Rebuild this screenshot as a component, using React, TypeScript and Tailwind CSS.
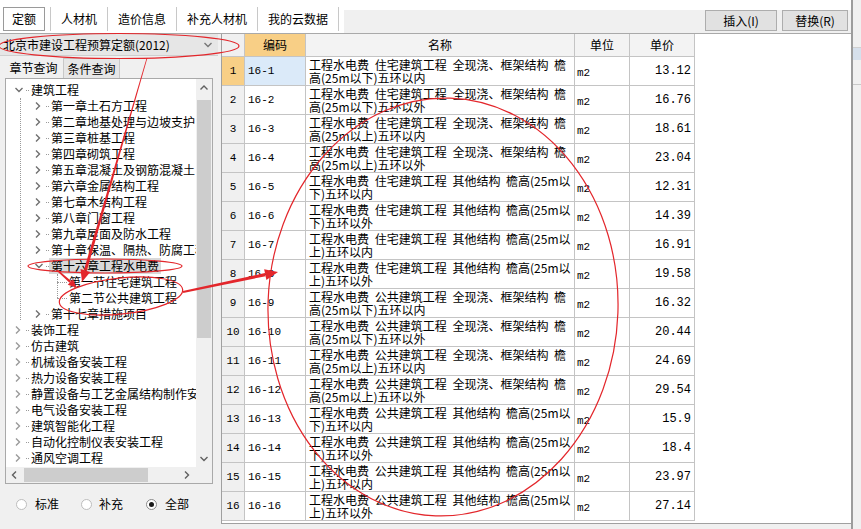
import React from "react";

const RED = "#e3262b";

type TreeNode = { label: string; level: 0 | 1 | 2; open?: boolean; active?: boolean };

const TREE: TreeNode[] = [
  { label: "建筑工程", level: 0, open: true },
  { label: "第一章土石方工程", level: 1 },
  { label: "第二章地基处理与边坡支护", level: 1 },
  { label: "第三章桩基工程", level: 1 },
  { label: "第四章砌筑工程", level: 1 },
  { label: "第五章混凝土及钢筋混凝土", level: 1 },
  { label: "第六章金属结构工程", level: 1 },
  { label: "第七章木结构工程", level: 1 },
  { label: "第八章门窗工程", level: 1 },
  { label: "第九章屋面及防水工程", level: 1 },
  { label: "第十章保温、隔热、防腐工程", level: 1 },
  { label: "第十六章工程水电费", level: 1, open: true, active: true },
  { label: "第一节住宅建筑工程", level: 2 },
  { label: "第二节公共建筑工程", level: 2 },
  { label: "第十七章措施项目", level: 1 },
  { label: "装饰工程", level: 0 },
  { label: "仿古建筑", level: 0 },
  { label: "机械设备安装工程", level: 0 },
  { label: "热力设备安装工程", level: 0 },
  { label: "静置设备与工艺金属结构制作安装工程", level: 0 },
  { label: "电气设备安装工程", level: 0 },
  { label: "建筑智能化工程", level: 0 },
  { label: "自动化控制仪表安装工程", level: 0 },
  { label: "通风空调工程", level: 0 },
];

// code, building kind, cast-in-place frame?, 以下/以上, 以内/以外, price
const ROWS: [string, string, boolean, string, string, string][] = [
  ["16-1", "住宅", true, "下", "内", "13.12"],
  ["16-2", "住宅", true, "下", "外", "16.76"],
  ["16-3", "住宅", true, "上", "内", "18.61"],
  ["16-4", "住宅", true, "上", "外", "23.04"],
  ["16-5", "住宅", false, "下", "内", "12.31"],
  ["16-6", "住宅", false, "下", "外", "14.39"],
  ["16-7", "住宅", false, "上", "内", "16.91"],
  ["16-8", "住宅", false, "上", "外", "19.58"],
  ["16-9", "公共", true, "下", "内", "16.32"],
  ["16-10", "公共", true, "下", "外", "20.44"],
  ["16-11", "公共", true, "上", "内", "24.69"],
  ["16-12", "公共", true, "上", "外", "29.54"],
  ["16-13", "公共", false, "下", "内", "15.9"],
  ["16-14", "公共", false, "下", "外", "18.4"],
  ["16-15", "公共", false, "上", "内", "23.97"],
  ["16-16", "公共", false, "上", "外", "27.14"],
];

const Chevron = ({ dir, color = "#7a7a7a" }: { dir: "right" | "down" | "up" | "left"; color?: string }) => {
  const d = {
    right: "M2 1.5l3.5 3.5-3.5 3.5",
    left: "M6 1.5L2.5 5 6 8.5",
    down: "M1.5 3l3.5 3.5L8.5 3",
    up: "M1.5 6.5L5 3l3.5 3.5",
  }[dir];
  return (
    <svg width="10" height="10" viewBox="0 0 10 10" className="shrink-0">
      <path d={d} fill="none" stroke={color} strokeWidth="1.4" />
    </svg>
  );
};

const TopBar = () => {
  const tabs = ["人材机", "造价信息", "补充人材机", "我的云数据"];
  return (
    <div className="flex h-[34px] border-b border-[#a9a9a9] bg-white">
      <div className="flex items-start pl-[3px] pt-[7px]">
        <div className="flex h-[24px] w-[42px] items-center justify-center border border-[#9a9a9a]">定额</div>
        <div className="ml-[5px] h-[24px] w-px bg-[#c8c8c8]" />
        {tabs.map((t) => (
          <React.Fragment key={t}>
            <div className="flex h-[24px] items-center px-[10px]">{t}</div>
            <div className="h-[24px] w-px bg-[#c8c8c8]" />
          </React.Fragment>
        ))}
      </div>
      <div className="ml-[5px] mt-[10px] flex flex-1 items-start justify-end gap-[5px] bg-[#f0f0f0] pr-[3px]">
        <button className="flex h-[21px] w-[72px] items-center justify-center border border-[#adadad] bg-[#e1e1e1]">
          插入(I)
        </button>
        <button className="flex h-[21px] w-[66px] items-center justify-center border border-[#adadad] bg-[#e1e1e1]">
          替换(R)
        </button>
      </div>
    </div>
  );
};

const TreeRow = ({ node }: { node: TreeNode }) => {
  const label = (
    <span className={`shrink-0 whitespace-nowrap px-[2px] ${node.active ? "bg-[#d9d9d9]" : ""}`}>{node.label}</span>
  );
  if (node.level === 2) {
    return (
      <div className="flex h-[16px] items-center">
        <div className="w-[51px] shrink-0" />
        <div className="w-[10px] shrink-0 border-t border-dotted border-[#9a9a9a]" />
        {label}
      </div>
    );
  }
  return (
    <div className="flex h-[16px] items-center">
      <div className={`shrink-0 ${node.level === 0 ? "w-[8px]" : "w-[28px]"}`} />
      <Chevron dir={node.open ? "down" : "right"} color={node.level === 0 && !node.open ? "#9a9a9a" : "#6f6f6f"} />
      <div className="flex w-[5px] shrink-0 items-center justify-end">
        <div className="w-[3px] border-t border-dotted border-[#9a9a9a]" />
      </div>
      {label}
    </div>
  );
};

const LeftPanel = () => (
  <div className="flex w-[218px] shrink-0 flex-col bg-[#f0f0f0]">
    <div className="flex h-[22px] items-center justify-between border-b border-[#cfcfcf] bg-[#e6e6e6] pl-[3px] pr-[5px]">
      <span className="whitespace-nowrap">北京市建设工程预算定额(2012)</span>
      <Chevron dir="down" color="#777" />
    </div>
    <div className="flex h-[22px] items-end pl-[5px]">
      <div className="flex h-[21px] w-[57px] items-center justify-center">章节查询</div>
      <div className="ml-[1px] flex h-[20px] w-[57px] items-center justify-center border border-b-0 border-[#c8c8c8] bg-[#e6e6e6]">
        条件查询
      </div>
    </div>
    <div className="mx-[5px] flex h-[406px] flex-col border border-[#a9a9a9] bg-white">
      <div className="flex min-h-0 flex-1">
        <div className="relative min-w-0 flex-1 overflow-hidden pt-[3px]">
          <div className="absolute left-[14px] top-[19px] h-[222px] border-l border-dotted border-[#9a9a9a]" />
          <div className="absolute left-[51px] top-[195px] h-[24px] border-l border-dotted border-[#9a9a9a]" />
          {TREE.map((n) => (
            <TreeRow key={n.label} node={n} />
          ))}
        </div>
        <div className="flex w-[16px] shrink-0 flex-col items-center bg-[#f0f0f0]">
          <div className="flex h-[17px] items-center">
            <Chevron dir="up" color="#606060" />
          </div>
          <div className="mt-[4px] h-[238px] w-[14px] bg-[#cdcdcd]" />
          <div className="flex-1" />
          <div className="flex h-[17px] items-center">
            <Chevron dir="down" color="#606060" />
          </div>
        </div>
      </div>
      <div className="flex h-[16px]">
        <div className="flex flex-1 items-center bg-[#f0f0f0]">
          <div className="flex w-[17px] justify-center">
            <Chevron dir="left" color="#606060" />
          </div>
          <div className="ml-px h-[14px] w-[124px] bg-[#cdcdcd]" />
          <div className="flex-1" />
          <div className="flex w-[17px] justify-center">
            <Chevron dir="right" color="#606060" />
          </div>
        </div>
        <div className="w-[16px] bg-[#f0f0f0]" />
      </div>
    </div>
    <div className="flex flex-1 items-center pl-[16px]">
      <div className="h-[11px] w-[11px] rounded-full border border-[#bdbdbd] bg-white" />
      <span className="ml-[8px]">标准</span>
      <div className="ml-[22px] h-[11px] w-[11px] rounded-full border border-[#bdbdbd] bg-white" />
      <span className="ml-[7px]">补充</span>
      <div className="ml-[23px] flex h-[11px] w-[11px] items-center justify-center rounded-full border border-[#8a8a8a] bg-white">
        <div className="h-[5px] w-[5px] rounded-full bg-[#1a1a1a]" />
      </div>
      <span className="ml-[8px]">全部</span>
    </div>
  </div>
);

const cell = "flex shrink-0 border-b border-r border-[#c4c4c4]";
const mono = "font-['Liberation_Mono',monospace]";

const QuotaTable = () => (
  <div className="ml-[3px] flex-1 border-b border-l border-[#a0a0a0] bg-white">
    <div className="flex h-[23px]">
      <div className={`${cell} w-[23px] bg-[#f0f0f0]`} />
      <div className={`${cell} w-[61px] items-center justify-center bg-[#f8cf86]`}>编码</div>
      <div className={`${cell} w-[269px] items-center justify-center bg-[#f3f3f3]`}>名称</div>
      <div className={`${cell} w-[55px] items-center justify-center bg-[#f3f3f3]`}>单位</div>
      <div className={`${cell} w-[65px] items-center justify-center bg-[#f3f3f3]`}>单价</div>
    </div>
    {ROWS.map(([code, kind, frame, h, loc, price], i) => {
      const line1 = frame
        ? `工程水电费 ${kind}建筑工程 全现浇、框架结构 檐`
        : `工程水电费 ${kind}建筑工程 其他结构 檐高(25m以`;
      const line2 = frame ? `高(25m以${h})五环以${loc}` : `${h})五环以${loc}`;
      const first = i === 0;
      return (
        <div key={code} className="flex h-[29px]">
          <div
            className={`${cell} ${mono} w-[23px] items-center justify-center text-[11px] ${
              first ? "bg-[#f8cf86]" : "bg-[#f0f0f0]"
            }`}
          >
            {i + 1}
          </div>
          <div className={`${cell} ${mono} w-[61px] items-center pl-[3px] text-[11px] ${first ? "bg-[#dbeaf9]" : ""}`}>
            {code}
          </div>
          <div className={`${cell} w-[269px] flex-col overflow-hidden pl-[3px] pt-[1px] leading-[13px] [word-spacing:3px]`}>
            <span className="whitespace-nowrap">{line1}</span>
            <span className="whitespace-nowrap">{line2}</span>
          </div>
          <div className={`${cell} ${mono} w-[55px] items-center pl-[2px] pt-[3px] text-[11px]`}>m2</div>
          <div className={`${cell} ${mono} w-[65px] items-center justify-end pr-[3px] text-[12px]`}>{price}</div>
        </div>
      );
    })}
  </div>
);

const Arrow = ({
  x1, y1, x2, y2, w1, w2, head,
}: { x1: number; y1: number; x2: number; y2: number; w1: number; w2: number; head: number }) => {
  const len = Math.hypot(x2 - x1, y2 - y1);
  const ux = (x2 - x1) / len;
  const uy = (y2 - y1) / len;
  const px = -uy;
  const py = ux;
  const bx = x2 - ux * head;
  const by = y2 - uy * head;
  const hw = head * 0.42;
  const shaft = [
    [x1 + (px * w1) / 2, y1 + (py * w1) / 2],
    [bx + (px * w2) / 2, by + (py * w2) / 2],
    [bx - (px * w2) / 2, by - (py * w2) / 2],
    [x1 - (px * w1) / 2, y1 - (py * w1) / 2],
  ];
  return (
    <g fill={RED}>
      <polygon points={shaft.map((p) => p.join(",")).join(" ")} />
      <polygon points={`${x2},${y2} ${bx + px * hw},${by + py * hw} ${bx - px * hw},${by - py * hw}`} />
    </g>
  );
};

const Annotations = () => (
  <svg className="pointer-events-none absolute left-0 top-0" width="861" height="529" viewBox="0 0 861 529">
    <g fill="none" stroke={RED} strokeWidth="1.2">
      <ellipse cx="119" cy="46" rx="120" ry="12.5" />
      <ellipse cx="105" cy="266" rx="77" ry="7" />
      <ellipse cx="121" cy="296" rx="62" ry="18" transform="rotate(-6 121 296)" />
      <ellipse cx="443" cy="307" rx="175" ry="209" transform="rotate(2 443 307)" />
    </g>
    <Arrow x1={147} y1={58} x2={82} y2={282} w1={0.8} w2={3} head={12} />
    <Arrow x1={57} y1={270} x2={77} y2={288} w1={1.6} w2={2.4} head={9} />
    <Arrow x1={183} y1={292} x2={278} y2={272} w1={2} w2={3.2} head={13} />
  </svg>
);

export default function App() {
  return (
    <div className="relative flex h-[529px] w-[861px] overflow-hidden bg-[#f0f0f0] font-['Noto_Sans_CJK_SC',sans-serif] text-[12px] leading-[16px] text-black">
      <div className="flex w-[851px] shrink-0 flex-col">
        <TopBar />
        <div className="flex h-[490px]">
          <LeftPanel />
          <QuotaTable />
        </div>
        <div className="flex-1" />
      </div>
      <div className="flex w-[10px] flex-col border-l-2 border-[#9c9c9c] bg-[#f0f0f0]">
        <div className="h-[48px] border-b border-[#d0d0d0]" />
        <div className="h-[12px] bg-[#d6e0ec]" />
        <div className="h-[25px] border-b border-[#c8c8c8]" />
      </div>
      <Annotations />
    </div>
  );
}
